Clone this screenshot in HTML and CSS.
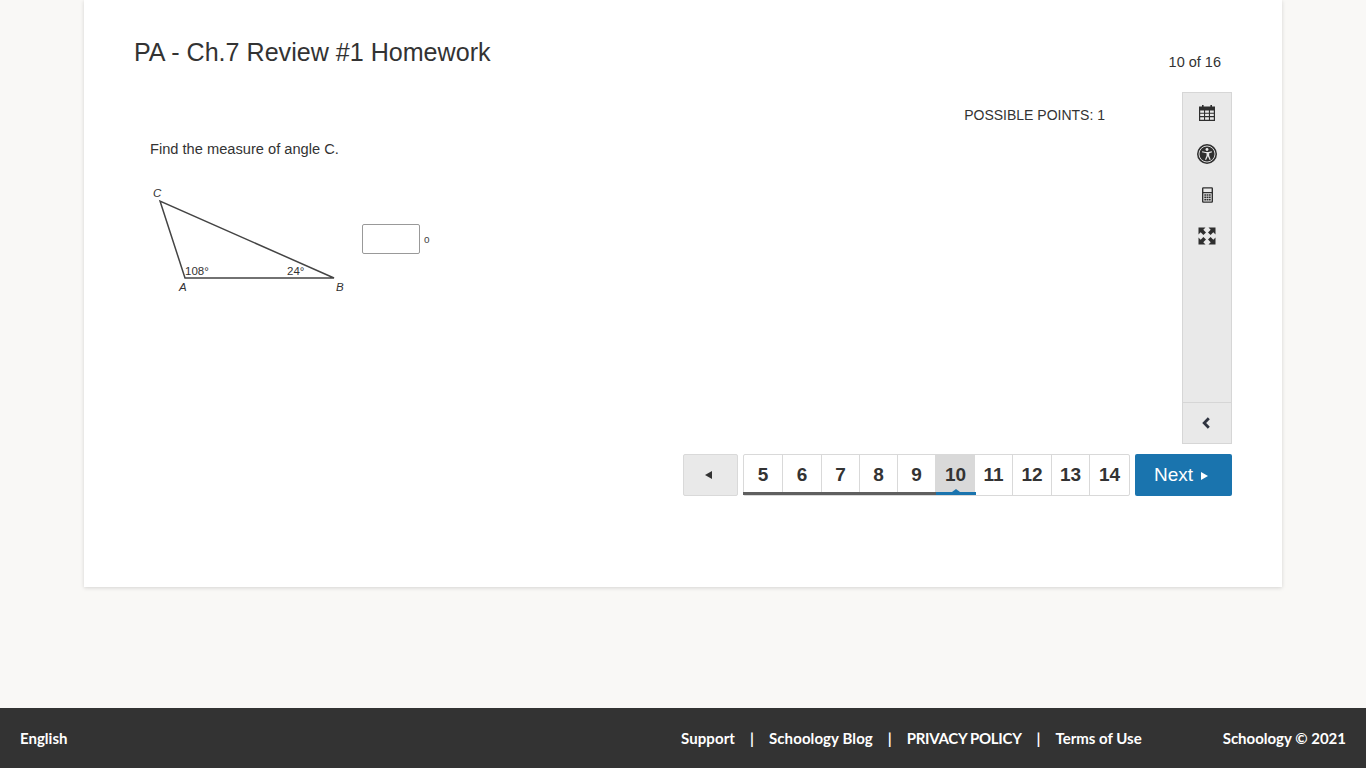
FILE: index.html
```html
<!DOCTYPE html>
<html lang="en">
<head>
<meta charset="utf-8">
<title>PA - Ch.7 Review #1 Homework</title>
<link rel="stylesheet" href="styles.css">
</head>
<body>
<main class="card">
  <header class="head">
    <h1 class="title">PA - Ch.7 Review #1 Homework</h1>
    <div class="count">10 of 16</div>
  </header>
  <section class="work">
    <div class="question">
      <div class="points">POSSIBLE POINTS: 1</div>
      <p class="prompt">Find the measure of angle C.</p>
      <div class="answer">
        <svg class="triangle" width="212" height="118" viewBox="0 0 212 118">
          <path class="tri-line" d="M10 15 L35 92 L184 92 Z"/>
          <text class="tri-label it" x="3" y="11">C</text>
          <text class="tri-label it" x="29" y="105">A</text>
          <text class="tri-label it" x="186" y="105">B</text>
          <text class="tri-label" x="35" y="89">108°</text>
          <text class="tri-label" x="137" y="89">24°</text>
        </svg>
        <input class="blank" type="text" aria-label="Angle C">
        <span class="deg">o</span>
      </div>
    </div>
    <aside class="tools">
      <div class="tool-list">
        <button class="tool">
          <svg width="18" height="18" viewBox="0 0 18 18"><path class="ink" d="M1 2.500h16V17H1z"/><path class="cut" d="M2.200 6.400h3.800v2.300H2.200zM7.100 6.400h3.800v2.300H7.100zM12 6.400h3.800v2.300H12zM2.200 9.800h3.800v2.300H2.200zM7.100 9.800h3.800v2.300H7.100zM12 9.800h3.800v2.300H12zM2.200 13.200h3.800v2.600H2.200zM7.100 13.200h3.800v2.600H7.100zM12 13.200h3.800v2.600H12z"/><path class="ink" d="M4 1h1.600v3H4zM12.400 1H14v3h-1.600z"/></svg>
        </button>
        <button class="tool">
          <svg width="20" height="20" viewBox="0 0 22 22"><circle class="ink" cx="11" cy="11" r="11"/><circle class="ring" cx="11" cy="11" r="8.800"/><circle class="cut" cx="11" cy="6.100" r="1.600"/><path class="cut" d="M5.800 7.900l3.600 1 3.200 0 3.600-1 .4 1.200-3.200 1.100v2.600l1.700 4.300-1.200.5-1.900-4.200h-.1l-1.900 4.200-1.200-.5 1.700-4.300v-2.600L5.400 9.100z"/></svg>
        </button>
        <button class="tool">
          <svg width="11" height="16" viewBox="0 0 12 17"><path class="ink" fill-rule="evenodd" d="M1.500 0h9A1.500 1.500 0 0 1 12 1.500v14a1.500 1.500 0 0 1-1.500 1.500h-9A1.500 1.500 0 0 1 0 15.500v-14A1.500 1.500 0 0 1 1.500 0zM1.500 1.300v4h9v-4zM1.500 6.600v9h9v-9z"/><path class="ink" d="M2.500 7.600h2v1.800h-2zM5 7.600h2v1.800H5zM7.500 7.600h2v1.800h-2zM2.500 10.200h2V12h-2zM5 10.200h2V12H5zM7.500 10.200h2V12h-2zM2.500 12.800h2v1.800h-2zM5 12.800h2v1.800H5zM7.500 12.800h2v1.800h-2z"/></svg>
        </button>
        <button class="tool">
          <svg width="18" height="18" viewBox="0 0 18 18"><path class="ink" d="M.5.500h7L5.300 2.700 8 5.400 5.400 8 2.700 5.300.5 7.500zM17.500.500v7l-2.200-2.200L12.600 8 10 5.400l2.700-2.700L10.500.500zM.5 17.500v-7l2.200 2.200L5.400 10 8 12.600l-2.700 2.700 2.200 2.200zM17.500 17.500h-7l2.200-2.200L10 12.600l2.600-2.600 2.700 2.700 2.200-2.200z"/></svg>
        </button>
      </div>
      <button class="tool collapse">
        <svg width="10" height="12" viewBox="0 0 10 12"><path class="stroke" d="M6.800 1.300L2.200 6l4.600 4.700"/></svg>
      </button>
    </aside>
  </section>
  <nav class="pager">
    <button class="prev"><span class="tri-left"></span></button>
    <ol class="pages">
      <li class="page done w39">5</li>
      <li class="page done w39">6</li>
      <li class="page done">7</li>
      <li class="page done">8</li>
      <li class="page done">9</li>
      <li class="page current w39">10</li>
      <li class="page">11</li>
      <li class="page w39">12</li>
      <li class="page">13</li>
      <li class="page w39">14</li>
    </ol>
    <button class="next">Next<span class="tri-right"></span></button>
  </nav>
</main>
<footer class="foot">
  <div class="lang">English</div>
  <div class="foot-right">
    <a class="flink roomy">Support</a><span class="sep">|</span>
    <a class="flink roomy">Schoology Blog</a><span class="sep">|</span>
    <a class="flink caps">PRIVACY POLICY</a><span class="sep">|</span>
    <a class="flink">Terms of Use</a>
    <span class="copy">Schoology © 2021</span>
  </div>
</footer>
</body>
</html>
```
FILE: styles.css
```css
* { box-sizing: border-box; }
html, body { margin: 0; padding: 0; }
body {
  height: 768px;
  overflow: hidden;
  display: flex;
  flex-direction: column;
  background: #f9f8f6;
  font-family: "Liberation Sans", Arial, sans-serif;
  color: #333;
}
.card {
  width: 1198px;
  height: 587px;
  margin: 0 auto 121px;
  padding: 0 50px;
  background: #fff;
  box-shadow: 0 1px 4px rgba(0, 0, 0, 0.15);
  flex: none;
}
.head {
  height: 92px;
  display: flex;
  justify-content: space-between;
  padding-right: 11px;
}
.title {
  margin: 38px 0 0;
  font-size: 25.100px;
  line-height: 28px;
  font-weight: 400;
  color: #333;
}
.count {
  margin-top: 54px;
  font-size: 14.500px;
  line-height: 16px;
}
.work {
  display: flex;
  height: 352px;
}
.question { flex: 1; padding: 0 0 0 16px; }
.points {
  margin-top: 15px;
  padding-right: 77px;
  text-align: right;
  font-size: 14px;
  line-height: 16px;
}
.prompt {
  margin: 18px 0 0;
  font-size: 14.650px;
  line-height: 17px;
  color: #333;
}
.answer {
  display: flex;
  align-items: flex-start;
  margin-top: 28px;
}
.triangle { display: block; flex: none; }
.tri-line { fill: none; stroke: #444; stroke-width: 1.500; }
.tri-label { font-size: 11.500px; fill: #333; }
.it { font-style: italic; }
.blank {
  width: 58px;
  height: 30px;
  margin-top: 38px;
  border: 1px solid #999;
  border-radius: 2px;
  background: #fff;
}
.deg {
  margin: 47px 0 0 4px;
  font-size: 10px;
  line-height: 14px;
  color: #444;
}
.tools {
  width: 50px;
  flex: none;
  display: flex;
  flex-direction: column;
  justify-content: space-between;
  background: #e9e9e9;
  border: 1px solid #d6d6d6;
}
.tool-list { display: flex; flex-direction: column; margin-top: -1px; }
.tool {
  height: 41px;
  width: 100%;
  padding: 0;
  border: 0;
  background: none;
  display: flex;
  align-items: center;
  justify-content: center;
}
.collapse { height: 41px; border-top: 1px solid #d6d6d6; }
.ink { fill: #2f2f2f; }
.cut { fill: #e9e9e9; }
.ring { fill: #2f2f2f; stroke: #e9e9e9; stroke-width: 1; }
.stroke { fill: none; stroke: #2f3440; stroke-width: 2.800; }
.pager {
  display: flex;
  justify-content: flex-end;
  align-items: stretch;
  gap: 5px;
  height: 42px;
  margin-top: 10px;
}
.prev {
  width: 55px;
  padding: 0 4px 0 0;
  display: flex;
  align-items: center;
  justify-content: center;
  background: #e9e9e9;
  border: 1px solid #d9d9d9;
  border-radius: 2px;
}
.tri-left {
  width: 0;
  height: 0;
  border-style: solid;
  border-width: 4px 7px 4px 0;
  border-color: transparent #333 transparent transparent;
}
.pages {
  list-style: none;
  margin: 0;
  padding: 0;
  display: flex;
  border: 1px solid #d9d9d9;
  border-radius: 2px;
}
.page {
  position: relative;
  width: 38px;
  display: flex;
  align-items: center;
  justify-content: center;
  font-size: 19px;
  font-weight: 700;
  color: #333;
  border-right: 1px solid #d9d9d9;
}
.w39 { width: 39px; }
.page:last-child { border-right: 0; }
.done::before,
.current::before {
  content: "";
  position: absolute;
  left: -1px;
  right: -1px;
  bottom: 0;
  height: 3px;
  background: #5f5f5f;
}
.current { background: #d9d9d9; border-right: 0; }
.current::before { left: 0; background: #1a74ae; }
.current::after {
  content: "";
  position: absolute;
  left: 50%;
  bottom: 3px;
  margin-left: -4px;
  border-style: solid;
  border-width: 0 4px 3px;
  border-color: transparent transparent #1a74ae;
}
.next {
  width: 97px;
  padding: 0 5px 0 0;
  display: flex;
  align-items: center;
  justify-content: center;
  gap: 8px;
  background: #1a74ae;
  border: 0;
  border-radius: 2px;
  color: #fff;
  font-family: "Liberation Sans", Arial, sans-serif;
  font-size: 19px;
}
.tri-right {
  width: 0;
  height: 0;
  margin-top: 1px;
  border-style: solid;
  border-width: 4px 0 4px 7px;
  border-color: transparent transparent transparent #fff;
}
.foot {
  height: 60px;
  flex: none;
  display: flex;
  justify-content: space-between;
  align-items: center;
  padding: 0 20px;
  background: #333;
  color: #fff;
  font-family: Lato, "Open Sans", sans-serif;
  font-size: 15px;
  font-weight: 700;
}
.foot-right { display: flex; align-items: center; }
.roomy { letter-spacing: 0.100px; }
.caps { letter-spacing: -0.300px; }
.sep { margin: 0 15px; }
.copy { margin-left: 81px; }
```
